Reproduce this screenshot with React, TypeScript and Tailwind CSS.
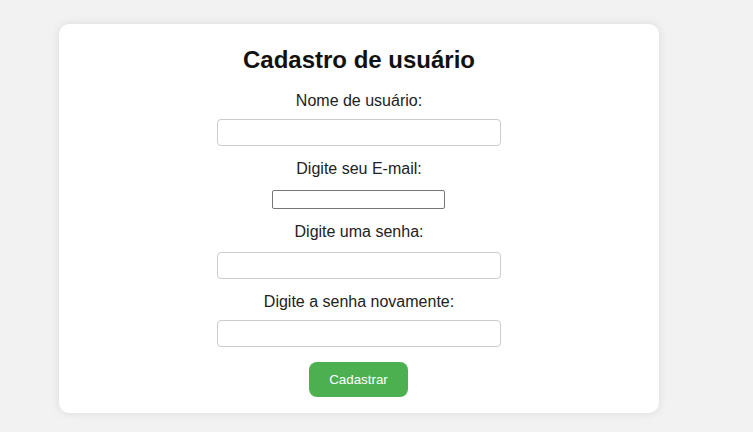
import React from "react";

export default function App() {
  const label = "block text-[16px] leading-[18px] text-[#222]";
  const input = "block w-[284px] h-[27px] border border-[#cccccc] rounded-[4px] bg-white";
  return (
    <div className="min-h-[432px] w-full bg-[#f2f2f2] pt-[24px]" style={{ fontFamily: '"Liberation Sans", Arial, sans-serif' }}>
      <div className="ml-[59px] w-[600px] bg-white rounded-[10px] shadow-[0_0_10px_rgba(0,0,0,0.1)] flex flex-col items-center pt-[22px] pb-[16px]">
        <h2 className="text-[24px] leading-[28px] font-bold text-[#111]">Cadastro de usuário</h2>
        <label className={`${label} mt-[18px]`}>Nome de usuário:</label>
        <input type="text" className={`${input} mt-[9px]`} />
        <label className={`${label} mt-[14px]`}>Digite seu E-mail:</label>
        <input type="email" className="block mt-[12px] mr-[1px] w-[173px] h-[19px] border border-[#767676] rounded-[2px] bg-white" />
        <label className={`${label} mt-[14px]`}>Digite uma senha:</label>
        <input type="password" className={`${input} mt-[11px]`} />
        <label className={`${label} mt-[14px]`}>Digite a senha novamente:</label>
        <input type="password" className={`${input} mt-[9px]`} />
        <button className="mt-[15px] mr-[1px] h-[35px] px-[20px] bg-[#4caf50] text-white text-[13.33px] rounded-[8px]">Cadastrar</button>
      </div>
    </div>
  );
}
